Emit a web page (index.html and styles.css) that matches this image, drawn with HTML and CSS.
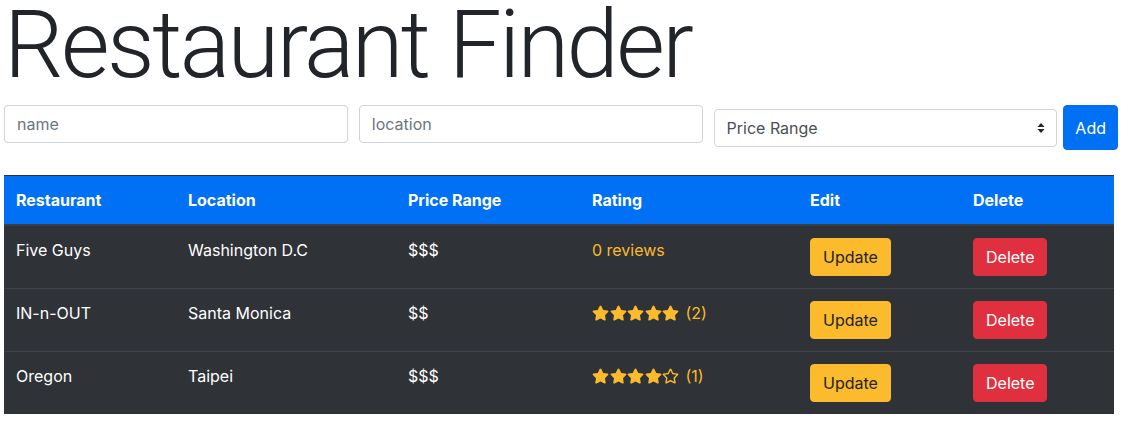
FILE: index.html
```html
<!DOCTYPE html>
<html lang="en">
<head>
<meta charset="utf-8">
<title>Restaurant Finder</title>
<link rel="stylesheet" href="styles.css">
</head>
<body>
<div class="container">
  <h1 class="title">Restaurant Finder</h1>
  <form class="add-form">
    <input class="field" type="text" placeholder="name">
    <input class="field" type="text" placeholder="location">
    <select class="field field-select">
      <option>Price Range</option>
      <option>$</option>
      <option>$$</option>
      <option>$$$</option>
      <option>$$$$</option>
      <option>$$$$$</option>
    </select>
    <button class="btn btn-add" type="button">Add</button>
  </form>

  <table class="restaurants">
    <thead>
      <tr>
        <th class="c-name">Restaurant</th>
        <th class="c-loc">Location</th>
        <th class="c-price">Price Range</th>
        <th class="c-rating">Rating</th>
        <th class="c-edit">Edit</th>
        <th class="c-del">Delete</th>
      </tr>
    </thead>
    <tbody>
      <tr>
        <td>Five Guys</td>
        <td>Washington D.C</td>
        <td>$$$</td>
        <td><span class="reviews">0 reviews</span></td>
        <td><button class="btn btn-update" type="button">Update</button></td>
        <td><button class="btn btn-delete" type="button">Delete</button></td>
      </tr>
      <tr>
        <td>IN-n-OUT</td>
        <td>Santa Monica</td>
        <td>$$</td>
        <td>
          <span class="stars">
            <svg class="star" viewBox="0 0 576 512"><path d="M259.3 17.8L194 150.2 47.9 171.5c-26.2 3.8-36.7 36.1-17.7 54.6l105.7 103-25 145.5c-4.5 26.3 23.2 46 46.4 33.7L288 439.6l130.7 68.7c23.2 12.2 50.9-7.4 46.4-33.7l-25-145.5 105.7-103c19-18.5 8.5-50.8-17.7-54.6L382 150.2 316.7 17.8c-11.7-23.6-45.6-23.9-57.4 0z"/></svg><svg class="star" viewBox="0 0 576 512"><path d="M259.3 17.8L194 150.2 47.9 171.5c-26.2 3.8-36.7 36.1-17.7 54.6l105.7 103-25 145.5c-4.5 26.3 23.2 46 46.4 33.7L288 439.6l130.7 68.7c23.2 12.2 50.9-7.4 46.4-33.7l-25-145.5 105.7-103c19-18.5 8.5-50.8-17.7-54.6L382 150.2 316.7 17.8c-11.7-23.6-45.6-23.9-57.4 0z"/></svg><svg class="star" viewBox="0 0 576 512"><path d="M259.3 17.8L194 150.2 47.9 171.5c-26.2 3.8-36.7 36.1-17.7 54.6l105.7 103-25 145.5c-4.5 26.3 23.2 46 46.4 33.7L288 439.6l130.7 68.7c23.2 12.2 50.9-7.4 46.4-33.7l-25-145.5 105.7-103c19-18.5 8.5-50.8-17.7-54.6L382 150.2 316.7 17.8c-11.7-23.6-45.6-23.9-57.4 0z"/></svg><svg class="star" viewBox="0 0 576 512"><path d="M259.3 17.8L194 150.2 47.9 171.5c-26.2 3.8-36.7 36.1-17.7 54.6l105.7 103-25 145.5c-4.5 26.3 23.2 46 46.4 33.7L288 439.6l130.7 68.7c23.2 12.2 50.9-7.4 46.4-33.7l-25-145.5 105.7-103c19-18.5 8.5-50.8-17.7-54.6L382 150.2 316.7 17.8c-11.7-23.6-45.6-23.9-57.4 0z"/></svg><svg class="star" viewBox="0 0 576 512"><path d="M259.3 17.8L194 150.2 47.9 171.5c-26.2 3.8-36.7 36.1-17.7 54.6l105.7 103-25 145.5c-4.5 26.3 23.2 46 46.4 33.7L288 439.6l130.7 68.7c23.2 12.2 50.9-7.4 46.4-33.7l-25-145.5 105.7-103c19-18.5 8.5-50.8-17.7-54.6L382 150.2 316.7 17.8c-11.7-23.6-45.6-23.9-57.4 0z"/></svg>
            <span class="count">(2)</span>
          </span>
        </td>
        <td><button class="btn btn-update" type="button">Update</button></td>
        <td><button class="btn btn-delete" type="button">Delete</button></td>
      </tr>
      <tr>
        <td>Oregon</td>
        <td>Taipei</td>
        <td>$$$</td>
        <td>
          <span class="stars">
            <svg class="star" viewBox="0 0 576 512"><path d="M259.3 17.8L194 150.2 47.9 171.5c-26.2 3.8-36.7 36.1-17.7 54.6l105.7 103-25 145.5c-4.5 26.3 23.2 46 46.4 33.7L288 439.6l130.7 68.7c23.2 12.2 50.9-7.4 46.4-33.7l-25-145.5 105.7-103c19-18.5 8.5-50.8-17.7-54.6L382 150.2 316.7 17.8c-11.7-23.6-45.6-23.9-57.4 0z"/></svg><svg class="star" viewBox="0 0 576 512"><path d="M259.3 17.8L194 150.2 47.9 171.5c-26.2 3.8-36.7 36.1-17.7 54.6l105.7 103-25 145.5c-4.5 26.3 23.2 46 46.4 33.7L288 439.6l130.7 68.7c23.2 12.2 50.9-7.4 46.4-33.7l-25-145.5 105.7-103c19-18.5 8.5-50.8-17.7-54.6L382 150.2 316.7 17.8c-11.7-23.6-45.6-23.9-57.4 0z"/></svg><svg class="star" viewBox="0 0 576 512"><path d="M259.3 17.8L194 150.2 47.9 171.5c-26.2 3.8-36.7 36.1-17.7 54.6l105.7 103-25 145.5c-4.5 26.3 23.2 46 46.4 33.7L288 439.6l130.7 68.7c23.2 12.2 50.9-7.4 46.4-33.7l-25-145.5 105.7-103c19-18.5 8.5-50.8-17.7-54.6L382 150.2 316.7 17.8c-11.7-23.6-45.6-23.9-57.4 0z"/></svg><svg class="star" viewBox="0 0 576 512"><path d="M259.3 17.8L194 150.2 47.9 171.5c-26.2 3.8-36.7 36.1-17.7 54.6l105.7 103-25 145.5c-4.5 26.3 23.2 46 46.4 33.7L288 439.6l130.7 68.7c23.2 12.2 50.9-7.4 46.4-33.7l-25-145.5 105.7-103c19-18.5 8.5-50.8-17.7-54.6L382 150.2 316.7 17.8c-11.7-23.6-45.6-23.9-57.4 0z"/></svg><svg class="star" viewBox="0 0 576 512"><path d="M528.1 171.5L382 150.2 316.7 17.8c-11.7-23.6-45.6-23.9-57.4 0L194 150.2 47.9 171.5c-26.2 3.8-36.7 36.1-17.7 54.6l105.7 103-25 145.5c-4.5 26.3 23.2 46 46.4 33.7L288 439.6l130.7 68.7c23.2 12.2 50.9-7.4 46.4-33.7l-25-145.5 105.7-103c19-18.5 8.5-50.8-17.7-54.6zM388.6 312.3l23.7 138.4L288 385.4l-124.3 65.3 23.7-138.4-100.6-98 139-20.2 62.2-126 62.2 126 139 20.2-100.6 98z"/></svg>
            <span class="count">(1)</span>
          </span>
        </td>
        <td><button class="btn btn-update" type="button">Update</button></td>
        <td><button class="btn btn-delete" type="button">Delete</button></td>
      </tr>
    </tbody>
  </table>
</div>
</body>
</html>
```

FILE: styles.css
```css
* {
  box-sizing: border-box;
}

body {
  margin: 0;
  background: #ffffff;
  color: #212529;
  font-family: Inter, "Noto Sans", "Liberation Sans", sans-serif;
  font-size: 16px;
  line-height: 1.5;
}

.container {
  width: 1110px;
  margin-left: 4px;
}

.title {
  margin: 0 0 15px 0;
  font-family: Roboto, "Liberation Sans", sans-serif;
  font-size: 94px;
  font-weight: 300;
  line-height: 90px;
  letter-spacing: -2.6px;
  color: #212529;
}

.add-form {
  display: grid;
  grid-template-columns: repeat(3, 1fr) auto;
  column-gap: 11px;
  align-items: start;
  width: 1114px;
  margin-bottom: 25px;
}

.field {
  display: block;
  width: 100%;
  height: 38px;
  padding: 6px 12px;
  font-family: inherit;
  font-size: 16px;
  line-height: 1.5;
  color: #495057;
  background: #fff;
  border: 1px solid #ced4da;
  border-radius: 4px;
  outline: none;
}

.field::placeholder {
  color: #6c757d;
}

.field-select {
  margin-top: 4px;
  appearance: none;
  -webkit-appearance: none;
  padding-right: 32px;
  background-image: url("data:image/svg+xml,%3Csvg xmlns='http://www.w3.org/2000/svg' width='8' height='12' viewBox='0 0 8 12'%3E%3Cpath d='M4 1L7.5 5H0.5z M4 11L0.5 7H7.5z' fill='%23212529'/%3E%3C/svg%3E");
  background-repeat: no-repeat;
  background-position: right 11px center;
  background-size: 8px 12px;
}

.btn {
  display: inline-block;
  font-family: inherit;
  font-size: 16px;
  line-height: 1.5;
  padding: 6px 12px;
  border: 1px solid transparent;
  border-radius: 4px;
  cursor: pointer;
}

.btn-add {
  margin-left: -5px;
  height: 45px;
  padding: 6px 11px;
  background: #0070f5;
  border-color: #0070f5;
  color: #fff;
}

.restaurants {
  width: 1110px;
  border-collapse: collapse;
  table-layout: fixed;
  background: #2f3237;
  color: #fff;
}

.restaurants th,
.restaurants td {
  padding: 12px;
  text-align: left;
  vertical-align: top;
  border-top: 1px solid #3f444b;
}

.restaurants thead th {
  background: #0070f5;
  font-weight: 700;
  border-top: 1px solid #2f3237;
  border-bottom: 2px solid #3a3f46;
}

.c-name { width: 172px; }
.c-loc { width: 220px; }
.c-price { width: 184px; }
.c-rating { width: 218px; }
.c-edit { width: 163px; }
.c-del { width: 153px; }

.reviews {
  color: #fcba2d;
}

.stars {
  display: inline-flex;
  align-items: center;
  color: #fcba2d;
}

.star {
  width: 17px;
  height: 16px;
  margin-right: 0.5px;
  fill: #fcba2d;
}

.count {
  margin-left: 6px;
}

.btn-update {
  background: #fcba2d;
  border-color: #fcba2d;
  color: #212529;
}

.btn-delete {
  background: #e0303f;
  border-color: #e0303f;
  color: #fff;
}
```
